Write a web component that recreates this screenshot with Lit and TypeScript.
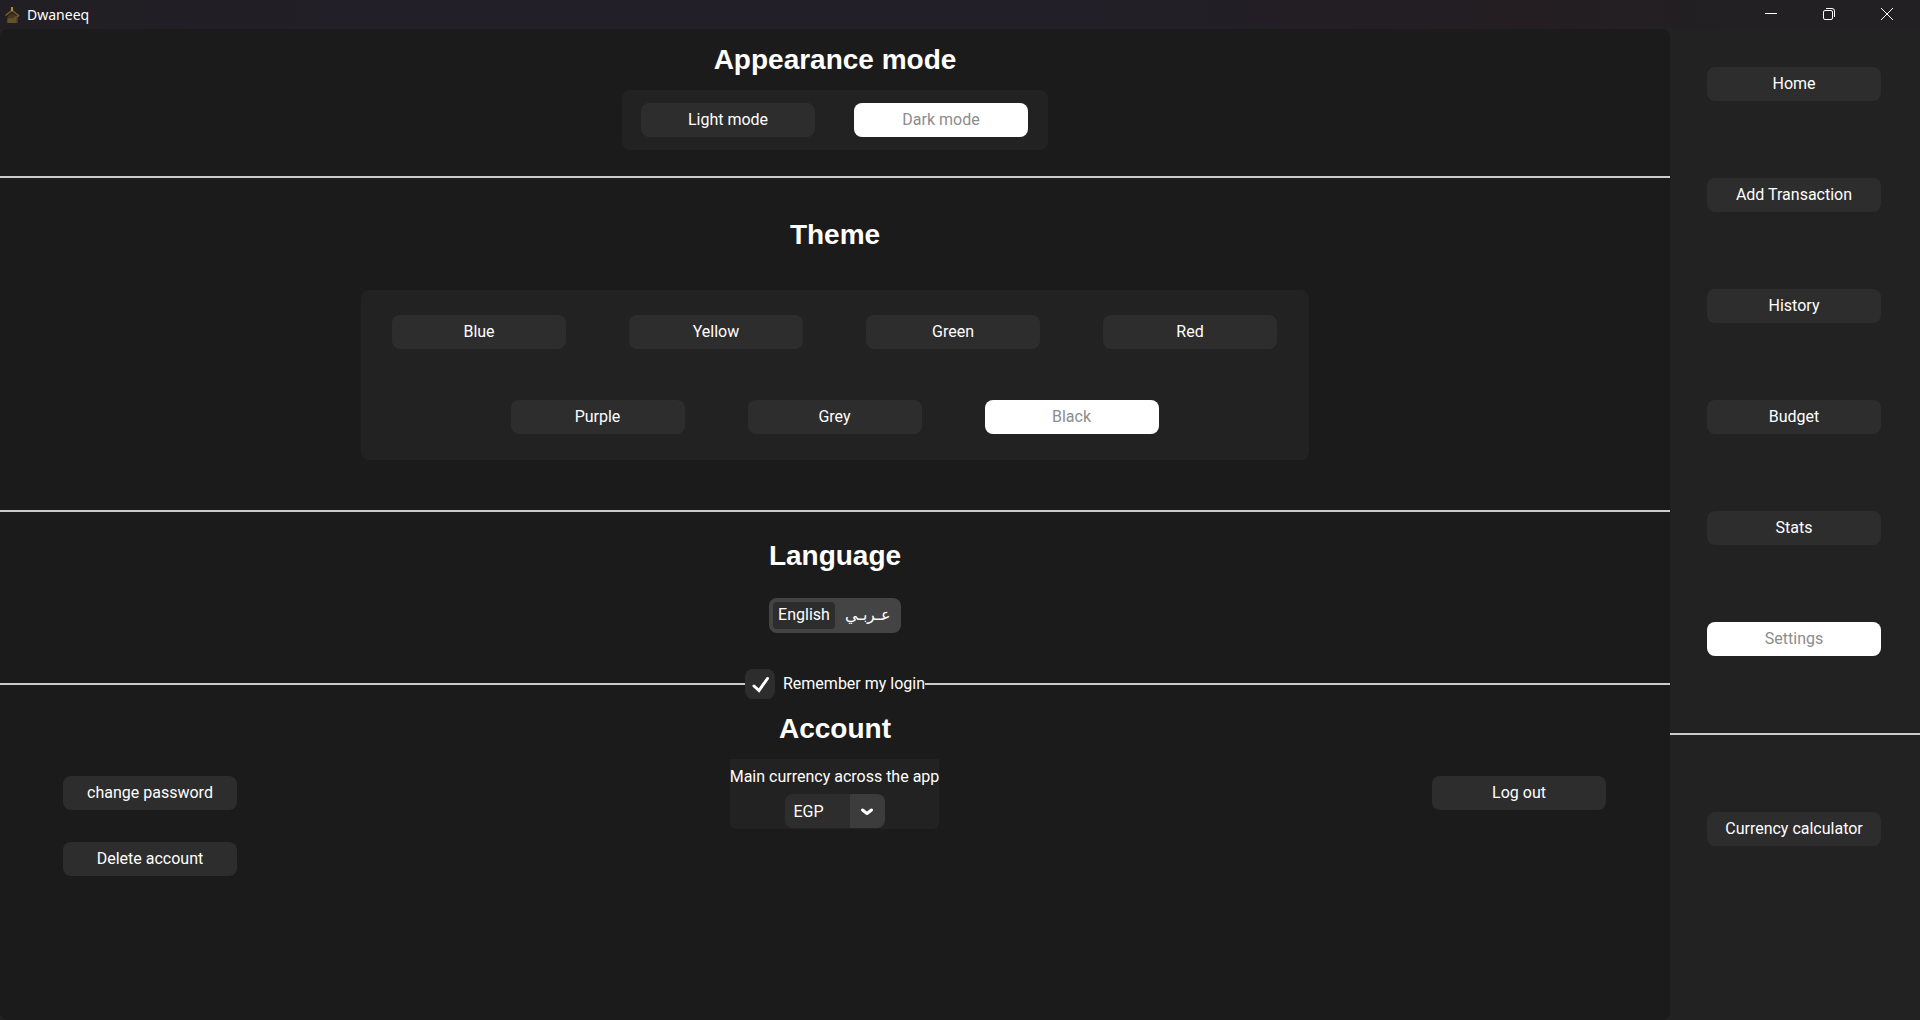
import { LitElement, html, css } from "lit";
import { customElement, state } from "lit/decorators.js";

const NAV = ["Home", "Add Transaction", "History", "Budget", "Stats", "Settings"];
const THEME_ROWS = [["Blue", "Yellow", "Green", "Red"], ["Purple", "Grey", "Black"]];

@customElement("app-root")
export class AppRoot extends LitElement {
  @state() private page = "Settings";
  @state() private mode = "Dark mode";
  @state() private theme = "Black";
  @state() private language = "English";

  static styles = css`
    :host {
      display: flex;
      flex-direction: column;
      min-height: 100vh;
      box-sizing: border-box;
      background: #222222;
      color: #ffffff;
      font-family: Roboto, "Noto Sans", sans-serif;
      font-size: 16px;
      line-height: 20px;
    }
    * { box-sizing: border-box; }
    button, select, input { font: inherit; color: inherit; margin: 0; border: 0; padding: 0; }
    button { cursor: pointer; }
    h1, h2 { margin: 0; }
    hr { margin: 0; border: 0; height: 2px; background: #cccccc; }

    .titlebar {
      display: flex;
      align-items: center;
      height: 29px;
      padding: 0 4px;
      background: linear-gradient(90deg, #211f23, #221f29 25%, #221f28 55%, #241e22 80%, #222022 90%);
    }
    .logo { width: 16px; height: 18px; }
    .app-name {
      flex: 1;
      padding-left: 7px;
      font: 400 14px/20px "Noto Sans", sans-serif;
    }
    .win {
      display: flex;
      align-items: center;
      justify-content: center;
      align-self: flex-start;
      width: 58px;
      height: 28px;
      background: none;
    }
    .win svg { display: block; width: 14px; height: 14px; }

    .body { flex: 1; display: flex; }
    .main {
      flex: 1;
      display: flex;
      flex-direction: column;
      background: #1b1b1b;
      border-radius: 8px;
    }
    .side { flex: 0 0 250px; display: flex; flex-direction: column; }
    .nav {
      display: flex;
      flex-direction: column;
      gap: 77px;
      padding: 38px 39px 77px 37px;
    }
    .nav.extra { padding-top: 77px; }

    .btn {
      width: 174px;
      height: 34px;
      border-radius: 8px;
      background: #2d2d2d;
      text-align: center;
    }
    .btn.on { background: #ffffff; color: #8c8c8c; }

    .section { display: flex; flex-direction: column; align-items: center; }
    .heading { font: 700 28px/32px "Liberation Sans", Arial, sans-serif; }
    .card { display: flex; background: #222222; border-radius: 8px; }
    .appearance { padding: 15px 0 26px; gap: 14px; }
    .modes { gap: 39px; padding: 13px 20px 13px 19px; }
    .themes { padding: 41px 0 50px; gap: 39px; }
    .palette { flex-direction: column; gap: 51px; padding: 25px 32px 26px 31px; }
    .palette-row { display: flex; justify-content: center; gap: 63px; }

    .language { padding: 28px 0 36px; gap: 26px; }
    .segments {
      display: flex;
      width: 132px;
      height: 35px;
      padding: 4px 0 4px 4px;
      border-radius: 8px;
      background: #444444;
    }
    .segment { flex: 1; border-radius: 4px; background: none; padding-bottom: 2px; }
    .segment.on { flex: 0 0 62px; background: #2d2d2d; }

    .remember { display: flex; align-items: center; }
    .remember hr { flex: 1; }
    .check { display: grid; grid-template-columns: 30px auto; column-gap: 8px; align-items: center; }
    .box {
      grid-area: 1 / 1;
      appearance: none;
      width: 30px;
      height: 30px;
      border-radius: 8px;
      background: #2d2d2d;
    }
    .tick { grid-area: 1 / 1; width: 30px; height: 30px; pointer-events: none; visibility: hidden; }
    .box:checked + .tick { visibility: visible; }

    .account { padding: 14px 0 0; gap: 14px; }
    .account-grid {
      align-self: stretch;
      display: grid;
      grid-template-columns: 1fr auto 1fr;
      align-items: start;
      padding: 0 64px 0 63px;
    }
    .stack { display: flex; flex-direction: column; gap: 32px; padding-top: 17px; }
    .stack.end { align-items: flex-end; }
    .currency {
      display: flex;
      flex-direction: column;
      align-items: center;
      gap: 7px;
      padding: 8px 0 1px;
      background: #222222;
      border-radius: 0 0 6px 6px;
    }
    .picker { display: grid; grid-template-columns: 65px 35px; }
    .select {
      grid-area: 1 / 1 / 2 / 3;
      appearance: none;
      width: 100px;
      height: 34px;
      padding: 1px 9px 0;
      border-radius: 8px;
      background: linear-gradient(90deg, #2d2d2d 65%, #3c3c3c 65%);
    }
    .arrow { grid-area: 1 / 2; width: 35px; height: 34px; pointer-events: none; }
  `;

  private choice(label: string, current: string, pick: () => void) {
    return html`<button
      class="btn ${label === current ? "on" : ""}"
      aria-pressed=${label === current}
      @click=${pick}
    >${label}</button>`;
  }

  render() {
    return html`
      <header class="titlebar">
        <svg class="logo" viewBox="0 0 16 18" aria-hidden="true">
          <path d="M3 17v-5l1-2 4-3 5 3 1 2v5z" fill="#46371d" />
          <path d="M3.500 13l3-1 2 .5 4-3v7.500h-9z" fill="#66502a" />
          <path d="M1.500 9.500L8 4.500l6.500 5-1.500 1.500" stroke="#7d6029" stroke-width="1.500" fill="none" />
          <path d="M8 1v4" stroke="#b58d36" stroke-width="2" fill="none" />
        </svg>
        <span class="app-name">Dwaneeq</span>
        <button class="win" aria-label="Minimize">
          <svg viewBox="0 0 14 14"><path d="M1 6.500h12" stroke="#fff" /></svg>
        </button>
        <button class="win" aria-label="Restore">
          <svg viewBox="0 0 14 14" fill="none" stroke="#fff">
            <rect x="1.5" y="3.5" width="9" height="9" rx="1.5" />
            <path d="M4 1.500h6a2.500 2.500 0 0 1 2.500 2.500v6" />
          </svg>
        </button>
        <button class="win" aria-label="Close">
          <svg viewBox="0 0 14 14"><path d="M1 1l12 12M13 1L1 13" stroke="#fff" /></svg>
        </button>
      </header>

      <div class="body">
        <main class="main">
          <section class="section appearance">
            <h2 class="heading">Appearance mode</h2>
            <div class="card modes">
              ${["Light mode", "Dark mode"].map((m) => this.choice(m, this.mode, () => (this.mode = m)))}
            </div>
          </section>
          <hr />
          <section class="section themes">
            <h2 class="heading">Theme</h2>
            <div class="card palette">
              ${THEME_ROWS.map((row) => html`
                <div class="palette-row">
                  ${row.map((t) => this.choice(t, this.theme, () => (this.theme = t)))}
                </div>`)}
            </div>
          </section>
          <hr />
          <section class="section language">
            <h2 class="heading">Language</h2>
            <div class="segments">
              ${["English", "عـربـي"].map((l) => html`<button
                class="segment ${l === this.language ? "on" : ""}"
                aria-pressed=${l === this.language}
                @click=${() => (this.language = l)}
              >${l}</button>`)}
            </div>
          </section>
          <div class="remember">
            <hr />
            <div class="check">
              <input class="box" id="remember" type="checkbox" checked />
              <svg class="tick" viewBox="0 0 30 30" aria-hidden="true">
                <path d="M9 17l5 4.500l8.500-12" fill="none" stroke="#fff" stroke-width="3" stroke-linecap="round" />
              </svg>
              <label for="remember">Remember my login</label>
            </div>
            <hr />
          </div>
          <section class="section account">
            <h2 class="heading">Account</h2>
            <div class="account-grid">
              <div class="stack">
                <button class="btn">change password</button>
                <button class="btn">Delete account</button>
              </div>
              <div class="currency">
                <label for="currency">Main currency across the app</label>
                <div class="picker">
                  <select class="select" id="currency">
                    <option>EGP</option>
                  </select>
                  <svg class="arrow" viewBox="0 0 35 34" aria-hidden="true">
                    <path d="M12.500 16l4.500 3.500l4.500-3.500" fill="none" stroke="#fff" stroke-width="3" stroke-linecap="round" stroke-linejoin="round" />
                  </svg>
                </div>
              </div>
              <div class="stack end">
                <button class="btn">Log out</button>
              </div>
            </div>
          </section>
        </main>

        <aside class="side">
          <nav class="nav">
            ${NAV.map((n) => this.choice(n, this.page, () => (this.page = n)))}
          </nav>
          <hr />
          <div class="nav extra">
            <button class="btn">Currency calculator</button>
          </div>
        </aside>
      </div>
    `;
  }
}
